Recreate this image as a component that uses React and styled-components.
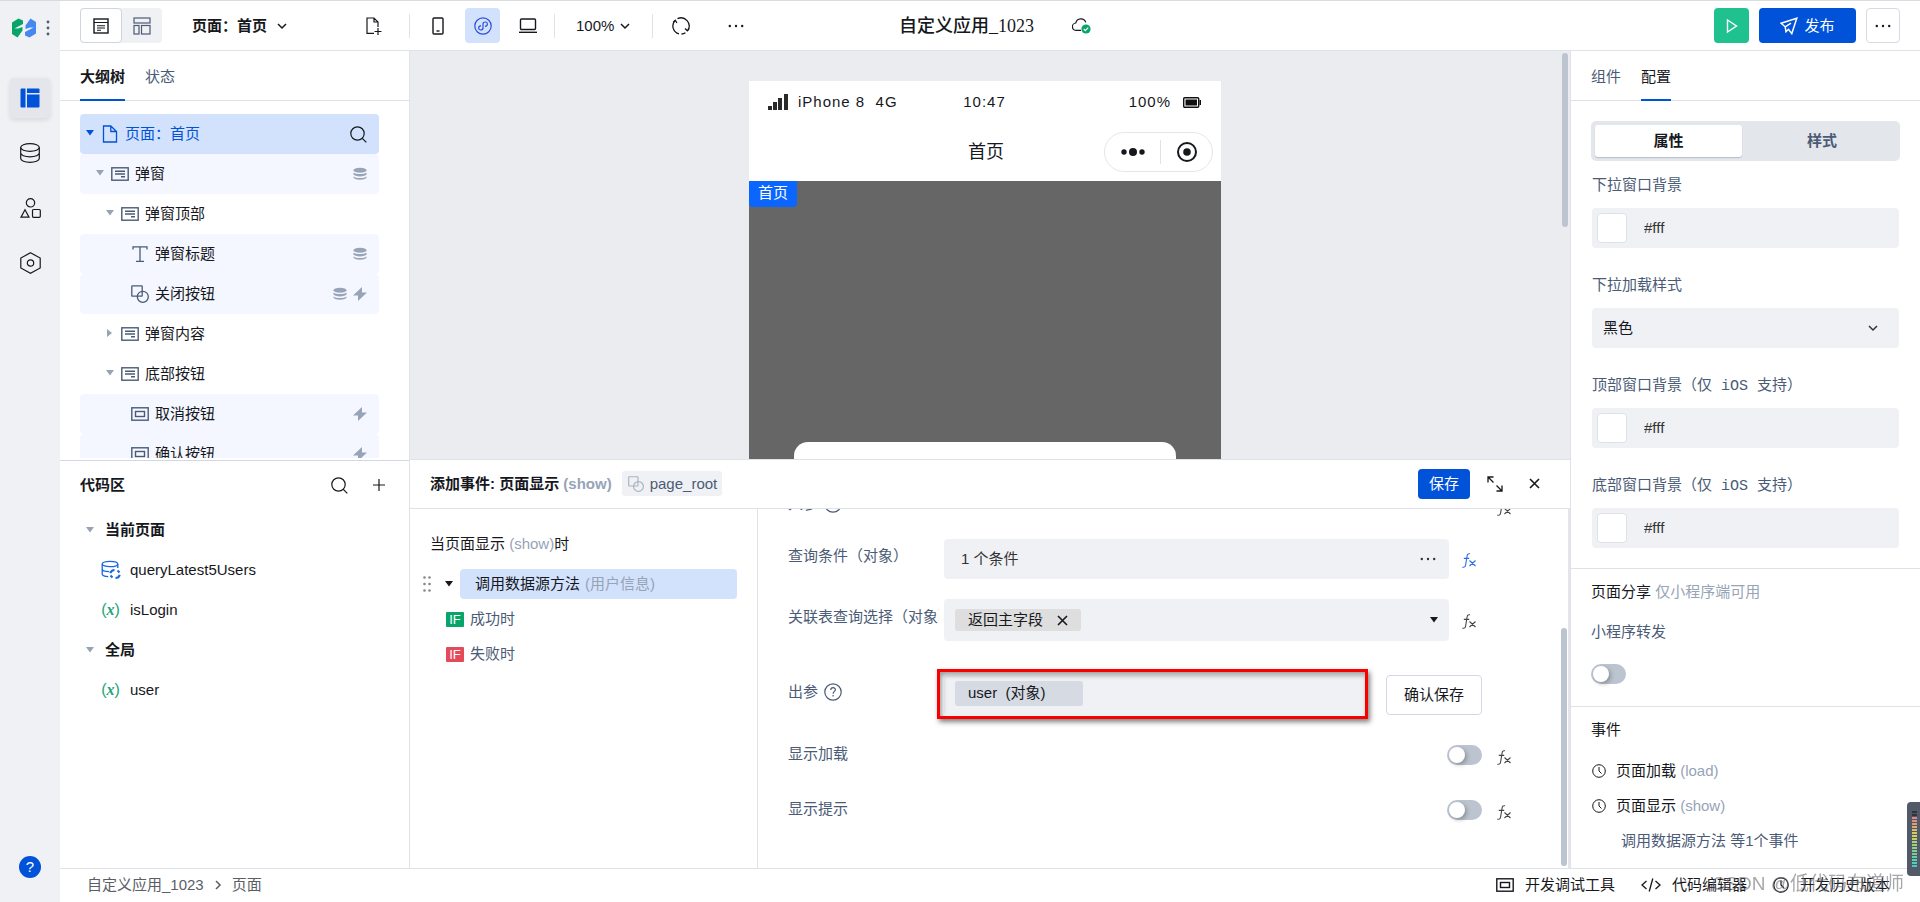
import React from 'react';
import styled, { createGlobalStyle, css } from 'styled-components';

const c = {
  blue: '#0052d9',
  ink: '#16181d',
  slate: '#4b5b76',
  mute: '#97a3b7',
  line: '#dfe2e8',
  field: '#f0f1f5',
  pick: '#d3e2fc',
  thumb: '#bcc4d0',
};

const Global = createGlobalStyle`
  * { box-sizing: border-box; }
  body {
    margin: 0;
    color: ${c.ink};
    background: #fff;
    font: 15px/20px "Liberation Sans", "Noto Sans CJK SC", sans-serif;
  }
  button, input, select { font: inherit; color: inherit; }
  button { display: inline-flex; align-items: center; padding: 0; border: 0; background: none; cursor: pointer; white-space: nowrap; }
  h1, h2, h3, p, ul { margin: 0; padding: 0; font-size: inherit; list-style: none; }
  svg { display: block; flex: none; }
  a { color: inherit; text-decoration: none; }
`;

/* ---------- icons ---------- */

const Svg = ({ w = 18, h = w, box, sw = 1.2, children, ...rest }) => (
  <svg width={w} height={h} viewBox={box || `0 0 ${w} ${h}`} fill="none" stroke="currentColor" strokeWidth={sw} aria-hidden="true" {...rest}>
    {children}
  </svg>
);
const LogoIcon = () => (
  <Svg w={24} h={20} stroke="none">
    <path d="M0 4.500 6.500.500 11 2.500v3.500L2.500 10.500l3.500 0 4.500-1.500v3.500L5.500 19.500 0 16z" fill="#07a568" />
    <path d="M24 15.500 17.500 19.500 13 17.500v-3.500l8.500-4.500-3.500 0-4.500 1.500V7.500L18.500.500 24 4z" fill="#4687f0" />
  </Svg>
);
const KebabIcon = () => (
  <Svg w={4} h={16} stroke="none"><g fill={c.slate}><circle cx="2" cy="2" r="1.4" /><circle cx="2" cy="8" r="1.4" /><circle cx="2" cy="14" r="1.4" /></g></Svg>
);
const BoardIcon = () => (
  <Svg w={20} stroke="none" fill="currentColor"><path d="M1 .5h4.500v19H1.500A1 1 0 0 1 .500 18.500v-17zM7 .5h11.500a1 1 0 0 1 1 1V5H7zM7 6.500h12.500v12a1 1 0 0 1-1 1H7z" /></Svg>
);
const DatabaseIcon = () => (
  <Svg w={20}><ellipse cx="10" cy="4.500" rx="9.300" ry="3.800" /><path d="M.7 4.500v11c0 2.100 4.100 3.800 9.300 3.800s9.300-1.700 9.300-3.800v-11M.7 10c0 2.100 4.100 3.800 9.300 3.800s9.300-1.700 9.300-3.800" /></Svg>
);
const ShapesIcon = () => (
  <Svg w={21} h={20}><circle cx="10.500" cy="4.800" r="4.200" /><path d="M5 11.800 9 19.200H1z" /><rect x="12.500" y="11.500" width="7.800" height="7.800" rx="1" /></Svg>
);
const HexIcon = () => (
  <Svg w={21} h={22}><path d="m10.500.8 9.700 5.200v10l-9.700 5.200L.8 16V6z" /><circle cx="10.500" cy="11" r="3.200" /></Svg>
);
const FormIcon = () => (
  <Svg w={16} sw={1.400}><rect x="1" y="1" width="14" height="14" /><path d="M1 4.500h14M4 7.700h8M4 10h8M4 12.200h4" strokeWidth="1.100" /></Svg>
);
const GridIcon = () => (
  <Svg w={18}><rect x="1" y="1" width="16" height="5" /><rect x="1" y="8.500" width="5" height="8.500" /><rect x="8.500" y="8.500" width="8.500" height="8.500" /></Svg>
);
const ChevronIcon = ({ right }) => (
  <Svg w={10} sw={1.500}><path d={right ? 'm3 1 4 4-4 4' : 'm1 3 4 4 4-4'} /></Svg>
);
const PageAddIcon = () => (
  <Svg w={16} h={18}><path d="M8 16.400H1V1h7l4 4v5M8 1v4h4M8.500 14.500h7M12 11v7" /></Svg>
);
const PhoneIcon = () => (
  <Svg w={12} h={18} sw={1.400}><rect x="1" y="1" width="10" height="16" rx="1" /><path d="M4.500 14h3" /></Svg>
);
const MiniAppIcon = () => (
  <Svg w={18}><circle cx="9" cy="9" r="8.200" /><path d="M7 8.600C3.600 9.400 4.200 13 6.600 13 8.100 13 9 12.200 9 11V7c0-1.200.9-2 2.400-2 2.400 0 3 3.600-.4 4.400" /></Svg>
);
const LaptopIcon = () => (
  <Svg w={18} h={16} sw={1.400}><rect x="1.500" y="1" width="15" height="10.500" rx="1" /><path d="M0 14.300h18" /></Svg>
);
const RefreshIcon = () => (
  <Svg w={18} sw={1.300}><path d="M7 16.900A8.100 8.100 0 0 1 3 3.600M5.500 1.700A8.100 8.100 0 0 1 15.800 13.400M13.500 15.700A8.100 8.100 0 0 1 9.500 17" /><path d="M1.200 5.200 3.300 3.200 4.900 6M13 11.500l2.300 2.300 2-2.500" /></Svg>
);
const DotsIcon = () => (
  <Svg w={16} h={4} stroke="none"><g fill="currentColor"><circle cx="1.800" cy="2" r="1.200" /><circle cx="8" cy="2" r="1.200" /><circle cx="14.200" cy="2" r="1.200" /></g></Svg>
);
const CloudIcon = () => (
  <Svg w={19} h={17}>
    <path d="M9 13.400H4.500A3.700 3.700 0 0 1 3.800 6a5.200 5.200 0 0 1 10-.6" />
    <circle cx="14" cy="12" r="4.600" fill="#07a568" stroke="none" />
    <path d="m11.800 12 1.600 1.600 2.800-2.900" stroke="#fff" />
  </Svg>
);
const PlayIcon = () => <Svg w={12} h={16} sw={1.400}><path d="M1.500 2 10.500 8l-9 6z" /></Svg>;
const SendIcon = () => <Svg w={18} sw={1.500}><path d="M16.800 1.200 1 6.200l4.200 3.600.8 5L8.500 12.300l3.300 4.300zM5.200 9.800l5.800-3.600" /></Svg>;
const Caret = ({ right, color = c.mute }) => (
  <Svg w={8} h={8} stroke="none"><path d={right ? 'M1 0v8l5-4z' : 'M0 1h8L4 6.500z'} fill={color} /></Svg>
);
const FileIcon = () => <Svg w={18} sw={1.300}><path d="M9.800 1H2.500v16h13V6.500zM9.800 1v5.500h5.700" /></Svg>;
const ContainerIcon = () => <Svg w={18} h={14} sw={1.400}><rect x=".8" y=".8" width="16.400" height="12.400" /><path d="M4 4.200h10M4 7h10M10 9.800h4" /></Svg>;
const TextIcon = () => <Svg w={18} sw={1.300}><path d="M2 4.500V1.800h14v2.700M9 1.800v14.500M5 16.300h8" /></Svg>;
const ShapeIcon = () => <Svg w={18} sw={1.300}><rect x=".8" y=".8" width="10.400" height="10.400" rx=".5" /><circle cx="11.800" cy="11.800" r="5.500" /></Svg>;
const ButtonIcon = () => <Svg w={18} h={14} sw={1.400}><rect x=".8" y=".8" width="16.400" height="12.400" /><rect x="4.500" y="4.500" width="9" height="5" /></Svg>;
const StackIcon = () => (
  <Svg w={14} stroke="none" fill="currentColor"><ellipse cx="7" cy="3.200" rx="6.500" ry="2.500" /><path d="M.5 5.600C3 7.600 11 7.600 13.500 5.600v2C12 10 2 10 .5 7.600zM.5 9.400C3 11.400 11 11.400 13.500 9.400v1.400c-1.500 2.600-11.500 2.600-13 0z" /></Svg>
);
const BoltIcon = () => <Svg w={14} stroke="none" fill="currentColor"><path d="M9 0 0 8.500h5V14l9-8.500H9z" /></Svg>;
const SearchIcon = () => <Svg w={17}><circle cx="7.500" cy="7.500" r="6.700" /><path d="m12.300 12.300 4 4" /></Svg>;
const PlusIcon = () => <Svg w={12}><path d="M6 0v12M0 6h12" /></Svg>;
const QueryIcon = () => (
  <Svg w={20} sw={1.300}><ellipse cx="9" cy="4" rx="7.800" ry="2.700" /><path d="M1.200 4v10c0 1.500 2.500 2.400 6 2.600M16.800 4v4M1.200 9c0 1.500 3 2.600 7 2.600" /><path d="M9.200 13.200c.8-2.200 2.400-3.200 4.300-3.200M18.800 14.800c-.8 2.200-2.400 3.200-4.300 3.200M16.500 10.500l2 2M11.500 17.500l-2-2" strokeWidth="2" /></Svg>
);
const FxIcon = () => <Svg w={14} h={15} sw={1.100}><path d="M8 .8C6 .3 5.300 1.500 5 3.500L3.600 12c-.3 1.800-1.200 2.600-3.300 2.200M1.800 5.400h5.400M7.500 7.500l6 5.500M13.500 7.500l-6 5.500" /></Svg>;
const HelpIcon = () => <Svg w={18}><circle cx="9" cy="9" r="8.200" /><path d="M6.700 7c.1-3.200 4.800-3 4.700-.2 0 1.600-2.300 1.700-2.300 3.900M9.100 12v1.500" /></Svg>;
const CloseIcon = () => <Svg w={11} sw={1.600}><path d="m1 1 9 9M10 1l-9 9" /></Svg>;
const ExpandIcon = () => <Svg w={16} sw={1.300}><path d="M1 6.500V1h5.500M1 1l5.500 5.500M15 9.500V15H9.500M15 15 9.500 9.500" /></Svg>;
const GripIcon = () => (
  <Svg w={8} h={16} stroke="none"><g fill="#888">{[1.500, 8, 14.500].map((y) => [1.500, 6.500].map((x) => <circle key={x + '-' + y} cx={x} cy={y} r="1.300" />))}</g></Svg>
);
const ClockIcon = () => <Svg w={14} sw={1}><circle cx="7" cy="7" r="6.300" /><path d="M7 3v4l2.500 2.500" /></Svg>;
const CodeIcon = () => <Svg w={20} h={14} sw={1.300}><path d="M5.500 3 1 7l4.500 4M14.500 3 19 7l-4.500 4M11.800.5 8.200 13.500" /></Svg>;
const HistoryIcon = () => <Svg w={16}><circle cx="8" cy="8" r="7.200" /><path d="M8 3.500V8l3 3" /></Svg>;
const SignalIcon = () => <Svg w={20} h={16} stroke="none"><path d="M0 12h4v4H0zM5 8h4v8H5zM10 4h4v12h-4zM16 0h4v16h-4z" fill="#2a2a2a" /></Svg>;
const BatteryIcon = () => <Svg w={18} h={11} stroke="none"><rect x=".7" y=".7" width="15" height="9.600" rx="1" stroke="#111" strokeWidth="1.400" /><path d="M2.500 2.500h11.500v6H2.500zM16.500 3H18v5h-1.500z" fill="#111" /></Svg>;
const TargetIcon = () => <Svg w={20} sw={2}><circle cx="10" cy="10" r="9" /><circle cx="10" cy="10" r="3.800" fill="currentColor" stroke="none" /></Svg>;
const MenuDotsIcon = () => <Svg w={24} h={8} stroke="none"><g fill="currentColor"><circle cx="3" cy="4" r="2.700" /><circle cx="12" cy="4" r="4" /><circle cx="21" cy="4" r="2.700" /></g></Svg>;

/* ---------- shell ---------- */

const Shell = styled.div`
  display: grid;
  grid-template-columns: 60px minmax(0, 1fr);
  grid-template-rows: minmax(0, 1fr);
  height: 100vh;
  border-top: 1px solid #dadbdd;
  overflow: hidden;
`;
const Rail = styled.nav`
  display: flex;
  flex-direction: column;
  align-items: center;
  gap: 15px;
  padding: 17px 0 24px;
  background: ${c.field};
`;
const Brand = styled.div`
  display: flex;
  align-items: center;
  gap: 10px;
  margin: 0 0 25px 1px;
`;
const RailButton = styled.button`
  justify-content: center;
  width: 40px;
  height: 40px;
  border-radius: 4px;
  ${(p) => p.$active && css`color: ${c.blue}; background: #e4e6eb; box-shadow: 0 2px 5px rgba(0, 0, 0, .1);`}
`;
const HelpButton = styled.button`
  justify-content: center;
  width: 22px;
  height: 22px;
  margin-top: auto;
  border-radius: 50%;
  color: #fff;
  background: ${c.blue};
`;
const Main = styled.div`
  display: grid;
  grid-template-rows: 50px minmax(0, 1fr) 34px;
  min-width: 0;
  min-height: 0;
`;
const TopBar = styled.header`
  display: flex;
  align-items: center;
  padding: 0 20px;
  border-bottom: 1px solid ${c.line};
`;
const TopSide = styled.div`
  display: flex;
  align-items: center;
  flex: 1 1 0;
  ${(p) => p.$end && css`justify-content: flex-end; gap: 10px;`}
`;
const ViewSwitch = styled.div`
  display: flex;
  width: 82px;
  height: 35px;
  border-radius: 4px;
  background: ${c.field};
`;
const ViewButton = styled.button`
  flex: 1;
  justify-content: center;
  border-radius: 4px;
  color: ${c.slate};
  ${(p) => p.$active && css`color: ${c.ink}; background: #fff; border: 1px solid #cfd5e0;`}
`;
const PageMenu = styled.button`
  gap: 10px;
  margin-left: 30px;
  font-weight: 700;
`;
const Tool = styled.button`
  justify-content: center;
  width: 35px;
  height: 35px;
  border-radius: 4px;
  ${(p) => p.$active && css`color: #2b50d8; background: ${c.pick};`}
`;
const ToolGroup = styled.div`
  display: flex;
  align-items: center;
  gap: ${(p) => p.$gap || 0}px;
  height: 24px;
  padding: 0 9px 0 10px;
  border-left: 1px solid ${c.line};
`;
const NewPage = styled(Tool)`
  margin: 0 18px 0 69px;
`;
const Zoom = styled.button`
  gap: 6px;
  padding: 0 13px 0 11px;
`;
const AppTitle = styled.h1`
  display: flex;
  align-items: center;
  gap: 38px;
  margin-left: 10px;
  font: 500 18px/24px "Liberation Serif", "Noto Sans CJK SC", serif;
`;
const RunButton = styled.button`
  justify-content: center;
  width: 35px;
  height: 35px;
  border-radius: 4px;
  color: #fff;
  background: #1fc28e;
`;
const PublishButton = styled.button`
  justify-content: center;
  gap: 6px;
  width: 97px;
  height: 35px;
  border-radius: 4px;
  color: #fff;
  background: ${c.blue};
`;
const MoreButton = styled.button`
  justify-content: center;
  width: 34px;
  height: 35px;
  border: 1px solid #d5dae3;
  border-radius: 4px;
`;

const Work = styled.div`
  display: grid;
  grid-template-columns: 350px minmax(0, 1fr) 350px;
  grid-template-rows: minmax(0, 1fr);
  min-height: 0;
`;
const Side = styled.aside`
  display: grid;
  grid-template-rows: minmax(0, 1fr) minmax(0, 1fr);
  border-right: 1px solid ${c.line};
  min-height: 0;
`;
const Pane = styled.section`
  display: flex;
  flex-direction: column;
  min-height: 0;
  overflow: hidden;
  ${(p) => p.$line && css`border-top: 1px solid #d3d8e2;`}
`;
const Tabs = styled.div`
  display: flex;
  flex: none;
  gap: 20px;
  height: 50px;
  padding: 0 20px;
  border-bottom: 1px solid ${c.line};
`;
const Tab = styled.button`
  height: 50px;
  padding: 3px 0 0;
  border-bottom: 2px solid transparent;
  color: ${c.slate};
  font-weight: ${(p) => (p.$bold ? 700 : 400)};
  ${(p) => p.$active && css`color: ${c.ink}; border-color: ${c.blue};`}
`;

/* ---------- outline tree ---------- */

const Tree = styled.ul`
  margin: 13px 30px 2px 20px;
  min-height: 0;
  overflow: hidden;
`;
const TreeRow = styled.li`
  display: flex;
  align-items: center;
  gap: 6px;
  height: 40px;
  padding: 0 12px 0 ${(p) => 6 + p.$level * 10}px;
  border-radius: 4px;
  color: ${c.mute};
  ${(p) => p.$filled && css`background: #f4f7ff;`}
  ${(p) => p.$active && css`background: ${c.pick}; color: ${c.ink};`}
`;
const TreeName = styled.button`
  flex: 1;
  gap: 6px;
  color: ${(p) => (p.$active ? c.blue : c.ink)};
  svg { color: ${(p) => (p.$active ? c.blue : c.slate)}; }
`;
const CaretSlot = styled.span`
  width: 9px;
  padding-bottom: 3px;
`;

const tree = [
  { level: 0, name: '页面：首页', icon: FileIcon, open: true, active: true },
  { level: 1, name: '弹窗', icon: ContainerIcon, open: true, filled: true, data: true },
  { level: 2, name: '弹窗顶部', icon: ContainerIcon, open: true },
  { level: 3, name: '弹窗标题', icon: TextIcon, filled: true, data: true },
  { level: 3, name: '关闭按钮', icon: ShapeIcon, filled: true, data: true, event: true },
  { level: 2, name: '弹窗内容', icon: ContainerIcon, open: false },
  { level: 2, name: '底部按钮', icon: ContainerIcon, open: true },
  { level: 3, name: '取消按钮', icon: ButtonIcon, filled: true, event: true },
  { level: 3, name: '确认按钮', icon: ButtonIcon, filled: true, event: true },
];

/* ---------- code area ---------- */

const CodeHeader = styled.div`
  display: flex;
  align-items: center;
  flex: none;
  gap: 25px;
  height: 49px;
  padding: 0 24px 0 20px;
  h2 { flex: 1; }
`;
const CodeRow = styled.li`
  display: flex;
  align-items: center;
  gap: ${(p) => (p.$group ? 11 : 9)}px;
  height: 40px;
  padding-left: ${(p) => (p.$group ? 26 : 40)}px;
  font-weight: ${(p) => (p.$group ? 700 : 400)};
`;
const CodeIconSlot = styled.span`
  display: flex;
  justify-content: center;
  width: 21px;
  color: #1a66e0;
`;
const Variable = styled.span`
  color: #1ca675;
  font-size: 16px;
  white-space: nowrap;
  i { font-family: "Liberation Serif", serif; font-weight: 700; }
`;

/* ---------- canvas ---------- */

const Center = styled.main`
  display: grid;
  grid-template-rows: minmax(0, 1fr) calc(50% + 1px);
  min-height: 0;
`;
const Canvas = styled.section`
  display: flex;
  align-items: flex-start;
  justify-content: center;
  min-height: 0;
  overflow: hidden;
  background: #ebecf0;
`;
const Phone = styled.div`
  width: 472px;
  margin: 30px auto 0;
  background: #fff;
`;
const PhoneStatus = styled.div`
  display: grid;
  grid-template-columns: 1fr auto 1fr;
  align-items: center;
  height: 42px;
  padding: 0 20px 0 19px;
  letter-spacing: 1px;
  span { display: flex; align-items: center; gap: 10px; white-space: pre; }
  span:last-child { justify-content: flex-end; gap: 12px; }
`;
const PhoneNav = styled.div`
  display: grid;
  grid-template-columns: 1fr auto 1fr;
  align-items: center;
  height: 58px;
  padding: 0 8px 0 10px;
  h2 { grid-column: 2; font: 400 18px/24px "Liberation Sans", "Noto Sans CJK SC", sans-serif; }
`;
const Capsule = styled.div`
  display: flex;
  align-items: center;
  justify-self: end;
  width: 109px;
  height: 40px;
  border: 1px solid #e4e6eb;
  border-radius: 20px;
  button { width: 55px; justify-content: center; height: 24px; }
  button + button { flex: 1; border-left: 1px solid ${c.line}; }
`;
const PhoneScreen = styled.div`
  display: flex;
  flex-direction: column;
  align-items: flex-start;
  min-height: 480px;
  background: #666;
`;
const PageTag = styled.span`
  padding: 2px 9px 4px;
  border-radius: 0 0 4px 4px;
  color: #fff;
  background: #0a66ff;
`;
const Dialog = styled.div`
  align-self: center;
  width: 382px;
  height: 245px;
  margin-top: 235px;
  border-radius: 14px;
  background: #fff;
`;
const ScrollBar = styled.div`
  flex: none;
  width: 6px;
  height: ${(p) => p.$length}px;
  margin: ${(p) => p.$margin};
  border-radius: 3px;
  background: ${c.thumb};
`;

/* ---------- event editor ---------- */

const Editor = styled.section`
  display: grid;
  grid-template-rows: 49px minmax(0, 1fr);
  min-height: 0;
  border-top: 1px solid ${c.line};
`;
const EditorHeader = styled.header`
  display: flex;
  align-items: center;
  padding: 0 30px 0 20px;
  border-bottom: 1px solid ${c.line};
`;
const Muted = styled.span`
  color: ${c.mute};
`;
const Component = styled.span`
  display: flex;
  align-items: center;
  gap: 6px;
  height: 25px;
  margin: 0 auto 0 10px;
  padding: 0 5px 0 6px;
  border-radius: 3px;
  color: ${c.slate};
  background: ${c.field};
  svg { color: #a9b3c3; width: 16px; height: 16px; }
`;
const SaveButton = styled.button`
  justify-content: center;
  width: 52px;
  height: 30px;
  margin-right: 17px;
  border-radius: 4px;
  color: #fff;
  background: ${c.blue};
`;
const HeadTools = styled.div`
  display: flex;
  align-items: center;
  gap: 26px;
`;
const EditorBody = styled.div`
  display: grid;
  grid-template-columns: 348px minmax(0, 1fr) auto;
  grid-template-rows: minmax(0, 1fr);
  min-height: 0;
  border-right: 2px solid #e3e5ea;
`;
const Flow = styled.div`
  padding: 25px 20px 0 13px;
  border-right: 1px solid ${c.line};
  h3 { padding-left: 7px; margin-bottom: 12px; font-weight: 400; }
`;
const FlowStep = styled.div`
  display: flex;
  align-items: center;
  gap: 14px;
  height: 36px;
`;
const FlowName = styled.button`
  flex: 1;
  gap: 5px;
  height: 30px;
  margin-left: -7px;
  padding-left: 15px;
  border-radius: 4px;
  background: ${c.pick};
`;
const Branch = styled.button`
  display: flex;
  gap: 6px;
  height: 35px;
  padding-left: 23px;
  color: ${c.slate};
`;
const IfBadge = styled.span`
  width: 18px;
  border-radius: 1px;
  color: #fff;
  background: ${(p) => p.$color};
  font-size: 13px;
  line-height: 15px;
  text-align: center;
`;
const Form = styled.form`
  display: flex;
  flex-direction: column;
  justify-content: flex-end;
  min-height: 0;
  overflow: hidden;
  padding: 0 42px 29px 30px;
`;
const FormRow = styled.div`
  display: flex;
  align-items: center;
  flex: none;
  height: ${(p) => p.$height}px;
  padding-right: ${(p) => p.$inset || 0}px;
  color: ${c.slate};
`;
const FieldLabel = styled.label`
  display: flex;
  align-items: center;
  flex: none;
  gap: 6px;
  width: 151px;
  margin: 0 5px 6px 0;
  overflow: hidden;
  white-space: nowrap;
`;
const Box = styled.div`
  position: relative;
  display: flex;
  align-items: center;
  flex: 1;
  min-width: 0;
  height: ${(p) => p.$height || 40}px;
  padding: 0 ${(p) => p.$end || 11}px 0 ${(p) => p.$start || 11}px;
  border-radius: 4px;
  color: #333;
  background: ${c.field};
`;
const BoxInput = styled.input`
  flex: 1;
  min-width: 0;
  padding: 0;
  border: 0;
  outline: 0;
  background: none;
`;
const Chip = styled.span`
  display: flex;
  align-items: center;
  gap: 14px;
  height: ${(p) => p.$height}px;
  margin-right: auto;
  padding: 0 13px;
  border-radius: 3px;
  color: ${c.ink};
  white-space: pre;
  background: ${(p) => p.$color};
  min-width: ${(p) => p.$width}px;
`;
const Fx = styled.button`
  width: 14px;
  margin-left: ${(p) => p.$gap || 15}px;
  padding-top: 2px;
  color: ${(p) => (p.$active ? '#2a6be0' : '#444')};
`;
const ConfirmButton = styled.button`
  justify-content: center;
  width: 96px;
  height: 40px;
  margin-left: 20px;
  border: 1px solid #d3d9e4;
  border-radius: 4px;
  color: ${c.ink};
`;
const OutputBox = styled(Box)`
  padding-bottom: 4px;
`;
const Highlight = styled.span`
  position: absolute;
  inset: -6px -2px -4px -7px;
  border: 3px solid #f90000;
  box-shadow: 2px 3px 5px rgba(0, 0, 0, .5), inset 2px 3px 5px rgba(0, 0, 0, .4);
  pointer-events: none;
`;
const Switch = styled.input`
  appearance: none;
  flex: none;
  display: block;
  width: 35px;
  height: 20px;
  margin: 0;
  ${(p) => p.$push && css`margin: 0 0 4px auto;`}
  border-radius: 10px;
  background: ${c.thumb};
  &::before {
    content: '';
    display: block;
    width: 16px;
    height: 16px;
    margin: 2px;
    border-radius: 50%;
    background: #fff;
    box-shadow: 2px 2px 4px rgba(0, 0, 0, .25);
  }
`;
const Spread = styled(FormRow)`
  justify-content: space-between;
`;

/* ---------- settings ---------- */

const Settings = styled.aside`
  display: flex;
  flex-direction: column;
  min-height: 0;
  overflow: hidden;
  border-left: 1px solid ${c.line};
`;
const Block = styled.section`
  padding: 0 20px ${(p) => p.$end || 0}px;
  border-bottom: ${(p) => (p.$last ? 0 : 1)}px solid ${c.line};
`;
const Segmented = styled.div`
  display: grid;
  grid-template-columns: 147px 1fr;
  gap: 6px;
  height: 40px;
  margin: 20px 0 14px;
  padding: 4px;
  border-radius: 5px;
  background: #e3e6eb;
`;
const Segment = styled.button`
  justify-content: center;
  border-radius: 3px;
  color: ${c.slate};
  font-weight: 700;
  ${(p) => p.$active && css`color: ${c.ink}; background: #fff; box-shadow: 0 1px 1px #b4bdcb;`}
`;
const Setting = styled.div`
  margin: 0 1px;
  padding-bottom: ${(p) => p.$gap || 27}px;
  label { display: block; height: 33px; color: ${c.slate}; }
`;
const Mono = styled.span`
  font-family: "Liberation Mono", monospace;
`;
const Swatch = styled.span`
  width: 30px;
  height: 30px;
  margin-right: 17px;
  border: 1px solid ${c.line};
  border-radius: 4px;
  background: #fff;
`;
const Select = styled.select`
  appearance: none;
  flex: 1;
  padding: 0;
  border: 0;
  color: ${c.ink};
  background: none;
`;
const BlockTitle = styled.h2`
  padding: 13px 0;
  font-weight: 400;
`;
const ShareLabel = styled.label`
  display: block;
  padding: 7px 0 22px;
  color: ${c.slate};
`;
const EventRow = styled.button`
  display: flex;
  gap: 10px;
  height: 35px;
  padding-left: 1px;
`;
const EventNote = styled.a`
  display: block;
  padding: 8px 0 0 30px;
  color: ${c.slate};
`;

/* ---------- footer ---------- */

const Footer = styled.footer`
  display: flex;
  align-items: center;
  justify-content: space-between;
  padding: 0 30px 2px 27px;
  border-top: 1px solid ${c.line};
`;
const Crumbs = styled.nav`
  display: flex;
  align-items: center;
  gap: 9px;
  color: #5a5e66;
`;
const FootTools = styled.div`
  display: flex;
  gap: 26px;
  button { gap: 11px; }
`;
const Watermark = styled.span`
  position: fixed;
  right: 16px;
  bottom: 6px;
  color: rgba(110, 110, 115, .6);
  font-size: 19px;
  line-height: 24px;
  pointer-events: none;
`;
const Meter = styled.div`
  position: fixed;
  right: 0;
  bottom: 26px;
  display: flex;
  flex-direction: column;
  gap: 1px;
  width: 13px;
  height: 74px;
  padding: 9px 3px 0 5px;
  border-radius: 4px 0 0 4px;
  background: #525968;
`;
const Level = styled.span`
  height: 2px;
  background: ${(p) => p.$color};
`;
const levels = ['#30343d', '#30343d', '#d98b86', '#dd8d79', '#dca06c', '#dcae66', '#d9bd62', '#d5c862', '#cdd063', '#c1d268', '#b1d270', '#a3d179', '#93d081', '#83cf8b', '#74cf97', '#68cfa2', '#5ccfad', '#50ceb6', '#43cdbd'];

const ColorSetting = ({ id, label, gap }) => (
  <Setting $gap={gap}>
    <label htmlFor={id}>{label}</label>
    <Box $start={5}>
      <Swatch />
      <BoxInput id={id} defaultValue="#fff" />
    </Box>
  </Setting>
);

const VariableMark = () => <Variable>(<i>x</i>)</Variable>;

export default function App() {
  return (
    <>
      <Global />
      <Shell>
        <Rail>
          <Brand><LogoIcon /><KebabIcon /></Brand>
          <RailButton $active aria-label="页面"><BoardIcon /></RailButton>
          <RailButton aria-label="数据"><DatabaseIcon /></RailButton>
          <RailButton aria-label="组件"><ShapesIcon /></RailButton>
          <RailButton aria-label="设置"><HexIcon /></RailButton>
          <HelpButton>?</HelpButton>
        </Rail>
        <Main>
          <TopBar>
            <TopSide>
              <ViewSwitch>
                <ViewButton $active aria-label="大纲"><FormIcon /></ViewButton>
                <ViewButton aria-label="布局"><GridIcon /></ViewButton>
              </ViewSwitch>
              <PageMenu>页面：首页<ChevronIcon /></PageMenu>
              <NewPage aria-label="新建页面"><PageAddIcon /></NewPage>
              <ToolGroup $gap={10}>
                <Tool aria-label="手机"><PhoneIcon /></Tool>
                <Tool $active aria-label="小程序"><MiniAppIcon /></Tool>
                <Tool aria-label="电脑"><LaptopIcon /></Tool>
              </ToolGroup>
              <ToolGroup><Zoom>100%<ChevronIcon /></Zoom></ToolGroup>
              <ToolGroup $gap={20}>
                <Tool aria-label="刷新"><RefreshIcon /></Tool>
                <Tool aria-label="更多"><DotsIcon /></Tool>
              </ToolGroup>
            </TopSide>
            <AppTitle>自定义应用_1023<CloudIcon /></AppTitle>
            <TopSide $end>
              <RunButton aria-label="运行"><PlayIcon /></RunButton>
              <PublishButton><SendIcon />发布</PublishButton>
              <MoreButton aria-label="更多"><DotsIcon /></MoreButton>
            </TopSide>
          </TopBar>

          <Work>
            <Side>
              <Pane>
                <Tabs>
                  <Tab $active $bold>大纲树</Tab>
                  <Tab>状态</Tab>
                </Tabs>
                <Tree>
                  {tree.map(({ icon: Icon, ...n }) => (
                    <TreeRow key={n.name} $level={n.level} $filled={n.filled} $active={n.active}>
                      <CaretSlot>{n.open !== undefined && <Caret right={!n.open} color={n.active ? c.blue : c.mute} />}</CaretSlot>
                      <TreeName $active={n.active}><Icon />{n.name}</TreeName>
                      {n.active && <SearchIcon />}
                      {n.data && <StackIcon />}
                      {n.event && <BoltIcon />}
                    </TreeRow>
                  ))}
                </Tree>
              </Pane>
              <Pane $line>
                <CodeHeader>
                  <h2>代码区</h2>
                  <button aria-label="搜索"><SearchIcon /></button>
                  <button aria-label="新增"><PlusIcon /></button>
                </CodeHeader>
                <ul>
                  <CodeRow $group><Caret />当前页面</CodeRow>
                  <CodeRow><CodeIconSlot><QueryIcon /></CodeIconSlot>queryLatest5Users</CodeRow>
                  <CodeRow><CodeIconSlot><VariableMark /></CodeIconSlot>isLogin</CodeRow>
                  <CodeRow $group><Caret />全局</CodeRow>
                  <CodeRow><CodeIconSlot><VariableMark /></CodeIconSlot>user</CodeRow>
                </ul>
              </Pane>
            </Side>

            <Center>
              <Canvas>
                <Phone>
                  <PhoneStatus>
                    <span><SignalIcon />{'iPhone 8  4G'}</span>
                    <span>10:47</span>
                    <span>100%<BatteryIcon /></span>
                  </PhoneStatus>
                  <PhoneNav>
                    <h2>首页</h2>
                    <Capsule>
                      <button aria-label="菜单"><MenuDotsIcon /></button>
                      <button aria-label="关闭小程序"><TargetIcon /></button>
                    </Capsule>
                  </PhoneNav>
                  <PhoneScreen>
                    <PageTag>首页</PageTag>
                    <Dialog />
                  </PhoneScreen>
                </Phone>
                <ScrollBar $length={174} $margin="2px 2px 0" />
              </Canvas>

              <Editor>
                <EditorHeader>
                  <h2>添加事件: 页面显示 <Muted>(show)</Muted></h2>
                  <Component><ShapeIcon />page_root</Component>
                  <SaveButton>保存</SaveButton>
                  <HeadTools>
                    <button aria-label="展开"><ExpandIcon /></button>
                    <button aria-label="关闭"><CloseIcon /></button>
                  </HeadTools>
                </EditorHeader>
                <EditorBody>
                  <Flow>
                    <h3>当页面显示 <Muted>(show)</Muted>时</h3>
                    <FlowStep>
                      <GripIcon />
                      <Caret color={c.ink} />
                      <FlowName>调用数据源方法 <Muted>(用户信息)</Muted></FlowName>
                    </FlowStep>
                    <Branch><IfBadge $color="#07a568">IF</IfBadge>成功时</Branch>
                    <Branch><IfBadge $color="#e54a5b">IF</IfBadge>失败时</Branch>
                  </Flow>
                  <Form onSubmit={(e) => e.preventDefault()}>
                    <Spread $height={64} $inset={8}>
                      <FieldLabel as="span">入参 <HelpIcon /></FieldLabel>
                      <Fx type="button" aria-label="表达式"><FxIcon /></Fx>
                    </Spread>
                    <FormRow $height={40} $inset={43}>
                      <FieldLabel htmlFor="condition">查询条件（对象）</FieldLabel>
                      <Box $start={17} $end={13}>
                        <BoxInput id="condition" defaultValue="1 个条件" />
                        <button type="button" aria-label="编辑条件"><DotsIcon /></button>
                      </Box>
                      <Fx type="button" $active $gap={13} aria-label="表达式"><FxIcon /></Fx>
                    </FormRow>
                    <FormRow $height={82} $inset={43}>
                      <FieldLabel as="span">关联表查询选择（对象）</FieldLabel>
                      <Box $height={42}>
                        <Chip $height={22} $color="#dededf">返回主字段<button type="button" aria-label="移除"><CloseIcon /></button></Chip>
                        <Caret color={c.ink} />
                      </Box>
                      <Fx type="button" $gap={13} aria-label="表达式"><FxIcon /></Fx>
                    </FormRow>
                    <FormRow $height={68} $inset={37}>
                      <FieldLabel as="span">出参 <HelpIcon /></FieldLabel>
                      <OutputBox>
                        <Chip $height={25} $width={128} $color="#d5dae3">{'user  (对象)'}</Chip>
                        <Highlight />
                      </OutputBox>
                      <ConfirmButton type="button">确认保存</ConfirmButton>
                    </FormRow>
                    <FormRow $height={55} $inset={8}>
                      <FieldLabel htmlFor="loading">显示加载</FieldLabel>
                      <Switch $push id="loading" type="checkbox" />
                      <Fx type="button" aria-label="表达式"><FxIcon /></Fx>
                    </FormRow>
                    <FormRow $height={55} $inset={8}>
                      <FieldLabel htmlFor="tips">显示提示</FieldLabel>
                      <Switch $push id="tips" type="checkbox" />
                      <Fx type="button" aria-label="表达式"><FxIcon /></Fx>
                    </FormRow>
                  </Form>
                  <ScrollBar $length={238} $margin="auto 1px 2px 0" />
                </EditorBody>
              </Editor>
            </Center>

            <Settings>
              <Tabs>
                <Tab>组件</Tab>
                <Tab $active>配置</Tab>
              </Tabs>
              <Block>
                <Segmented>
                  <Segment $active>属性</Segment>
                  <Segment>样式</Segment>
                </Segmented>
                <ColorSetting id="pull-bg" label="下拉窗口背景" />
                <Setting>
                  <label htmlFor="pull-style">下拉加载样式</label>
                  <Box $end={21}>
                    <Select id="pull-style"><option>黑色</option></Select>
                    <ChevronIcon />
                  </Box>
                </Setting>
                <ColorSetting id="top-bg" label={<>顶部窗口背景（仅<Mono> iOS </Mono>支持）</>} />
                <ColorSetting id="bottom-bg" label={<>底部窗口背景（仅<Mono> iOS </Mono>支持）</>} gap={20} />
              </Block>
              <Block $end={22}>
                <BlockTitle>页面分享 <Muted>仅小程序端可用</Muted></BlockTitle>
                <ShareLabel htmlFor="share">小程序转发</ShareLabel>
                <Switch id="share" type="checkbox" />
              </Block>
              <Block $last>
                <BlockTitle>事件</BlockTitle>
                <EventRow><ClockIcon /><span>页面加载 <Muted>(load)</Muted></span></EventRow>
                <EventRow><ClockIcon /><span>页面显示 <Muted>(show)</Muted></span></EventRow>
                <EventNote href="#event">调用数据源方法 等1个事件</EventNote>
              </Block>
            </Settings>
          </Work>

          <Footer>
            <Crumbs>
              <a href="#app">自定义应用_1023</a>
              <ChevronIcon right />
              <a href="#page">页面</a>
            </Crumbs>
            <FootTools>
              <button><ButtonIcon />开发调试工具</button>
              <button><CodeIcon />代码编辑器</button>
              <button><HistoryIcon />开发历史版本</button>
            </FootTools>
          </Footer>
        </Main>
      </Shell>
      <Watermark>CSDN @低代码布道师</Watermark>
      <Meter>{levels.map((color, i) => <Level key={i} $color={color} />)}</Meter>
    </>
  );
}
